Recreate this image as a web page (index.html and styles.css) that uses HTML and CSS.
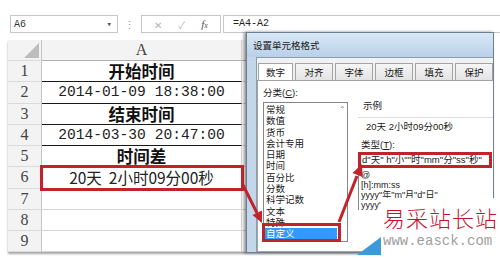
FILE: index.html
```html
<!DOCTYPE html>
<html lang="zh-CN">
<head>
    <meta charset="UTF-8">
    <meta name="viewport" content="width=device-width, initial-scale=1.0">
    <title>设置单元格格式</title>
    <link rel="stylesheet" href="styles.css">
</head>
<body>

<div class="formula-bar">
    <div class="name-box"><span>A6</span><span class="drop">▾</span></div>
    <div class="grip">⋮</div>
    <div class="fx-box">
        <span class="cancel">✕</span>
        <span class="enter">✓</span>
        <span class="fx">f<small>x</small></span>
    </div>
    <div class="formula">=A4-A2</div>
</div>

<div class="sheet">
    <div class="row head">
        <div class="rh corner"><span class="tri"></span></div>
        <div class="cell">A</div>
        <div class="cell next"></div>
    </div>
    <div class="row">
        <div class="rh">1</div>
        <div class="cell title ruled">开始时间</div>
        <div class="cell next"></div>
    </div>
    <div class="row">
        <div class="rh">2</div>
        <div class="cell date ruled">2014-01-09 18:38:00</div>
        <div class="cell next"></div>
    </div>
    <div class="row">
        <div class="rh">3</div>
        <div class="cell title ruled">结束时间</div>
        <div class="cell next"></div>
    </div>
    <div class="row">
        <div class="rh">4</div>
        <div class="cell date ruled">2014-03-30 20:47:00</div>
        <div class="cell next"></div>
    </div>
    <div class="row">
        <div class="rh">5</div>
        <div class="cell title">时间差</div>
        <div class="cell next"></div>
    </div>
    <div class="row">
        <div class="rh">6</div>
        <div class="cell result">20天&nbsp;&nbsp;2小时09分00秒</div>
        <div class="cell next"></div>
    </div>
    <div class="row">
        <div class="rh">7</div>
        <div class="cell"></div>
        <div class="cell next"></div>
    </div>
    <div class="row">
        <div class="rh">8</div>
        <div class="cell"></div>
        <div class="cell next"></div>
    </div>
    <div class="row">
        <div class="rh">9</div>
        <div class="cell"></div>
        <div class="cell next"></div>
    </div>
</div>

<!-- dialog window over the sheet -->
<div class="dialog">
    <div class="titlebar">设置单元格格式</div>
    <div class="dialog-body">
        <div class="tabs">
            <div class="tab active">数字</div>
            <div class="tab">对齐</div>
            <div class="tab">字体</div>
            <div class="tab">边框</div>
            <div class="tab">填充</div>
            <div class="tab">保护</div>
        </div>
        <div class="panel">
            <div class="category">
                <div class="label">分类(<u>C</u>):</div>
                <div class="listbox">
                    <div class="items">
                        <div>常规</div>
                        <div>数值</div>
                        <div>货币</div>
                        <div>会计专用</div>
                        <div>日期</div>
                        <div>时间</div>
                        <div>百分比</div>
                        <div>分数</div>
                        <div>科学记数</div>
                        <div>文本</div>
                        <div>特殊</div>
                        <div class="selected">自定义</div>
                    </div>
                    <div class="scroll">⌃</div>
                </div>
            </div>
            <div class="detail">
                <div class="sample-label">示例</div>
                <div class="sample">20天 2小时09分00秒</div>
                <div class="type-label">类型(<u>T</u>):</div>
                <div class="type-input">d"天" h"小""时"mm"分"ss"秒"</div>
                <div class="type-list">
                    <div>@</div>
                    <div>[h]:mm:ss</div>
                    <div>yyyy"年"m"月"d"日"</div>
                    <div>yyyy"年"m"月"</div>
                </div>
            </div>
        </div>
    </div>
</div>

<!-- red marks drawn on top -->
<svg class="marks" width="500" height="258" viewBox="0 0 500 258">
    <rect x="41.5" y="166.5" width="201" height="23" fill="none" stroke="#c1232b" stroke-width="3"/>
    <rect x="263.5" y="224.5" width="76" height="16" fill="none" stroke="#c1232b" stroke-width="3"/>
    <line x1="243" y1="185" x2="257" y2="213" stroke="#c1232b" stroke-width="3"/>
    <polygon points="262,223 252.5,215 262,210.5" fill="#c1232b"/>
    <line x1="339" y1="222" x2="357" y2="176" stroke="#c1232b" stroke-width="3"/>
    <polygon points="362,164 362.5,177 352.5,173" fill="#c1232b"/>
</svg>

<div class="watermark">
    <svg class="corner-tri" width="24" height="18" viewBox="0 0 24 18">
        <polygon points="0,18 24,0 24,18" fill="#3b9ad8"/>
    </svg>
    <div class="wm-name">易采站长站</div>
    <div class="wm-url">www.easck.com</div>
</div>

</body>
</html>
```

FILE: styles.css
```css
*{
    box-sizing: border-box;
}
body{
    margin: 0;
    width: 500px;
    height: 258px;
    overflow: hidden;
    position: relative;
    background-color: #fff;
    font-family: "Noto Sans CJK SC", sans-serif;
    color: #222;
}

/* formula bar */
.formula-bar{
    display: flex;
    height: 18px;
    margin: 15px 0 7px 10px;
}
.name-box{
    width: 108px;
    border: 1px solid #c6c6c6;
    display: flex;
    align-items: center;
    justify-content: space-between;
    padding: 0 5px 0 3px;
    font: 10px "Liberation Mono", monospace;
    color: #333;
}
.drop{
    font-size: 9px;
    color: #555;
}
.grip{
    width: 23px;
    display: flex;
    justify-content: center;
    align-items: center;
    font-size: 11px;
    color: #999;
}
.fx-box{
    width: 80px;
    border: 1px solid #c6c6c6;
    display: flex;
    align-items: center;
    justify-content: space-around;
    padding: 0 4px;
}
.cancel, .enter{
    font-size: 10px;
    color: #b4b4b4;
}
.fx{
    font: italic 11px "Liberation Serif", serif;
    color: #555;
}
.fx small{
    font-size: 8px;
}
.formula{
    flex: 1;
    margin-left: 2px;
    border: 1px solid #c6c6c6;
    border-right: none;
    padding-left: 9px;
    font: 10px/16px "Liberation Mono", monospace;
    color: #222;
}

/* sheet */
.sheet{
    margin-left: 8px;
    box-shadow: 0 2px 2px rgba(0, 0, 0, 0.35);
}
.row{
    display: flex;
    height: 21.25px;
}
.row.head{
    height: 21px;
}
.rh{
    width: 34px;
    flex-shrink: 0;
    background-color: #f3f3f3;
    border-right: 1px solid #c4c4c4;
    border-bottom: 1px solid #dadada;
    display: flex;
    align-items: center;
    justify-content: center;
    font: 16px "Liberation Serif", serif;
    color: #444;
}
.corner{
    align-items: flex-end;
    justify-content: flex-end;
    padding: 0 2px 2px 0;
}
.tri{
    width: 0;
    height: 0;
    border-left: 15px solid transparent;
    border-bottom: 15px solid #bdbdbd;
}
.cell{
    width: 200px;
    flex-shrink: 0;
    border-right: 1px solid #d4d4d4;
    border-bottom: 1px solid #d4d4d4;
    display: flex;
    align-items: center;
    justify-content: center;
    white-space: nowrap;
}
.cell.next{
    width: 100px;
}
.head .cell{
    background-color: #f3f3f3;
    border-bottom-color: #b0b0b0;
    font: 16px "Liberation Serif", serif;
    color: #444;
}
.cell.ruled{
    border-bottom-color: #1a1a1a;
}
.title{
    font-size: 16.5px;
    font-weight: 700;
    color: #111;
}
.date{
    font: 14.6px "Liberation Mono", monospace;
    color: #222;
}
.result{
    font-size: 15.5px;
    color: #222;
}

/* format cells dialog */
.dialog{
    position: absolute;
    left: 246px;
    top: 32px;
    width: 248px;
    height: 221px;
    background-color: #c4d6ea;
    border: 1px solid #6d7f93;
    box-shadow: -2px 0 3px rgba(0, 0, 0, 0.45);
    font-family: "Liberation Sans", "Noto Sans CJK SC", sans-serif;
    font-size: 9.5px;
    color: #1a1a1a;
    overflow: hidden;
}
.titlebar{
    height: 24px;
    padding-left: 6px;
    display: flex;
    align-items: center;
    background: linear-gradient(#dae8f6, #b9d0e9);
}
.dialog-body{
    margin-left: 9px;
    height: 196px;
    background-color: #f2f2f2;
    border: 1px solid #8d9db0;
    border-right: none;
    padding: 5px 0 0 0;
}
.tabs{
    display: flex;
    gap: 2px;
    padding-left: 1px;
    height: 17px;
}
.tab{
    width: 38px;
    border: 1px solid #a3a3a3;
    border-bottom: none;
    background: linear-gradient(#f6f6f6, #e3e3e3);
    display: flex;
    align-items: center;
    justify-content: center;
}
.tab.active{
    width: 35px;
    background: #fff;
}
.panel{
    height: 172px;
    background-color: #fff;
    border: 1px solid #a3a3a3;
    border-right: none;
    display: flex;
    padding: 6px 0 0 5px;
}
.label{
    line-height: 12px;
    margin-bottom: 3px;
}
.listbox{
    width: 85px;
    height: 140px;
    border: 1px solid #82878f;
    display: flex;
}
.items{
    flex: 1;
    padding-top: 1px;
}
.items div{
    height: 11.3px;
    line-height: 11.3px;
    padding-left: 2px;
}
.items .selected{
    background-color: #3399ff;
    color: #fff;
}
.scroll{
    width: 10px;
    text-align: center;
    font-size: 8px;
    line-height: 14px;
    color: #777;
}
.detail{
    flex: 1;
    margin: 13px 0 0 10px;
}
.sample-label{
    line-height: 12px;
    padding-left: 5px;
}
.sample{
    margin-top: 5px;
    height: 19px;
    border-top: 1px solid #dcdcdc;
    padding: 3px 0 0 8px;
    line-height: 12px;
}
.type-label{
    margin-top: 3px;
    line-height: 12px;
    padding-left: 3px;
}
.type-input{
    margin-top: 1px;
    width: 134px;
    height: 16px;
    border: 3px solid #c1232b;
    padding-left: 1px;
    line-height: 10px;
    white-space: nowrap;
    overflow: hidden;
}
.type-list{
    margin-top: 2px;
    border-left: 1px solid #82878f;
    padding-left: 2px;
    font-size: 9px;
    white-space: nowrap;
}
.type-list div{
    height: 10px;
    line-height: 10px;
}

.marks{
    position: absolute;
    left: 0;
    top: 0;
}

/* site watermark */
.watermark{
    position: absolute;
    left: 381px;
    top: 198px;
    width: 119px;
    height: 60px;
    background-color: #fff;
    padding: 6px 0 0 2px;
}
.corner-tri{
    position: absolute;
    left: -24px;
    bottom: 3px;
}
.wm-name{
    font-size: 22px;
    font-weight: 300;
    line-height: 26px;
    letter-spacing: 1px;
    color: #c8102e;
}
.wm-url{
    margin-top: 3px;
    font: 14px "Liberation Mono", monospace;
    color: #a0a0a0;
}
```
